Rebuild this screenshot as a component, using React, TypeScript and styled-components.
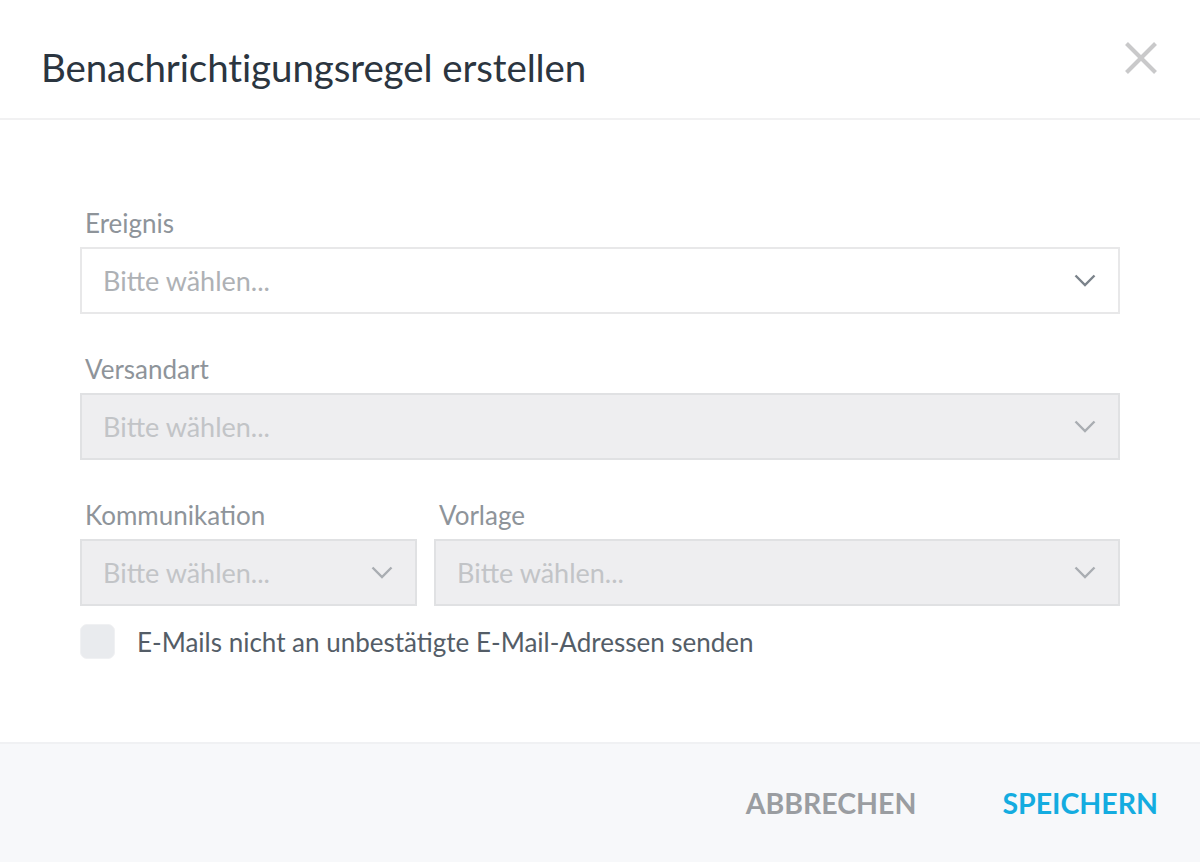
import React from 'react';
import styled, { createGlobalStyle } from 'styled-components';

const GlobalStyle = createGlobalStyle`
  html, body {
    margin: 0;
    padding: 0;
    background: #ffffff;
  }
  body {
    font-family: Lato, "Open Sans", "Liberation Sans", sans-serif;
  }
`;

const Dialog = styled.div`
  width: 1200px;
  height: 862px;
  display: flex;
  flex-direction: column;
  background: #ffffff;
`;

const Header = styled.header`
  height: 120px;
  flex: none;
  display: flex;
  align-items: center;
  justify-content: space-between;
  padding: 16px 42px 0 41px;
  box-sizing: border-box;
  border-bottom: 2px solid #f1f1f2;
`;

const Title = styled.h1`
  margin: 0;
  font-size: 38.5px;
  font-weight: 400;
  color: #2b3540;
  letter-spacing: -0.1px;
`;

const CloseButton = styled.button`
  width: 34px;
  height: 34px;
  padding: 0;
  border: none;
  background: transparent;
  display: flex;
  align-items: center;
  justify-content: center;
  margin-top: -19px;
  cursor: pointer;
`;

const Body = styled.div`
  flex: 1;
  padding: 87px 80px 0;
  display: flex;
  flex-direction: column;
  gap: 39px;
`;

const Row = styled.div`
  display: grid;
  grid-template-columns: 337px 1fr;
  column-gap: 17px;
`;

const Field = styled.div`
  display: flex;
  flex-direction: column;
`;

const FieldLabel = styled.label`
  font-size: 26px;
  line-height: 32px;
  color: #8e949a;
  padding-left: 5px;
  margin-bottom: 8px;
`;

const SelectBox = styled.div<{ $disabled?: boolean }>`
  height: 67px;
  box-sizing: border-box;
  display: flex;
  align-items: center;
  justify-content: space-between;
  padding: 0 22px 0 21px;
  border: 2px solid ${(p) => (p.$disabled ? '#e0e1e3' : '#e8e8e9')};
  background: ${(p) => (p.$disabled ? '#eeeef0' : '#ffffff')};
  color: ${(p) => (p.$disabled ? '#c2c4c7' : '#aeb1b5')};
  font-size: 27px;
`;

const Chevron = styled.svg<{ $disabled?: boolean }>`
  width: 22px;
  height: 13px;
  stroke: ${(p) => (p.$disabled ? '#a9adb2' : '#7b838b')};
  flex: none;
`;

const CheckRow = styled.label`
  display: flex;
  align-items: center;
  gap: 22px;
  margin-top: -21px;
  font-size: 26px;
  color: #545d67;
`;

const CheckBox = styled.span`
  width: 35px;
  height: 35px;
  box-sizing: border-box;
  border-radius: 7px;
  background: #e9ebee;
  border: 1px solid #f0f1f3;
  flex: none;
`;

const Footer = styled.footer`
  height: 120px;
  flex: none;
  box-sizing: border-box;
  background: #f7f8fa;
  border-top: 2px solid #f0f1f3;
  display: flex;
  align-items: center;
  justify-content: flex-end;
  gap: 86px;
  padding: 0 42px 0 0;
`;

const FooterButton = styled.button<{ $primary?: boolean }>`
  border: none;
  background: transparent;
  padding: 0;
  font-family: inherit;
  font-size: 28.5px;
  font-weight: 700;
  letter-spacing: 0;
  color: ${(p) => (p.$primary ? '#14ace0' : '#9a9da1')};
  cursor: pointer;
`;

const Select: React.FC<{ disabled?: boolean }> = ({ disabled }) => (
  <SelectBox $disabled={disabled}>
    <span>Bitte wählen...</span>
    <Chevron $disabled={disabled} viewBox="0 0 22 13" fill="none" strokeWidth={2.4}>
      <polyline points="1.5,1.5 11,11 20.5,1.5" />
    </Chevron>
  </SelectBox>
);

export default function App() {
  return (
    <>
      <GlobalStyle />
      <Dialog>
        <Header>
          <Title>Benachrichtigungsregel erstellen</Title>
          <CloseButton aria-label="Schließen">
            <svg width="32" height="32" viewBox="0 0 32 32" stroke="#c9c9ca" strokeWidth="4">
              <line x1="1.5" y1="1.5" x2="30.5" y2="30.5" />
              <line x1="30.5" y1="1.5" x2="1.5" y2="30.5" />
            </svg>
          </CloseButton>
        </Header>
        <Body>
          <Field>
            <FieldLabel>Ereignis</FieldLabel>
            <Select />
          </Field>
          <Field>
            <FieldLabel>Versandart</FieldLabel>
            <Select disabled />
          </Field>
          <Row>
            <Field>
              <FieldLabel>Kommunikation</FieldLabel>
              <Select disabled />
            </Field>
            <Field>
              <FieldLabel>Vorlage</FieldLabel>
              <Select disabled />
            </Field>
          </Row>
          <CheckRow>
            <CheckBox />
            E-Mails nicht an unbestätigte E-Mail-Adressen senden
          </CheckRow>
        </Body>
        <Footer>
          <FooterButton>ABBRECHEN</FooterButton>
          <FooterButton $primary>SPEICHERN</FooterButton>
        </Footer>
      </Dialog>
    </>
  );
}
